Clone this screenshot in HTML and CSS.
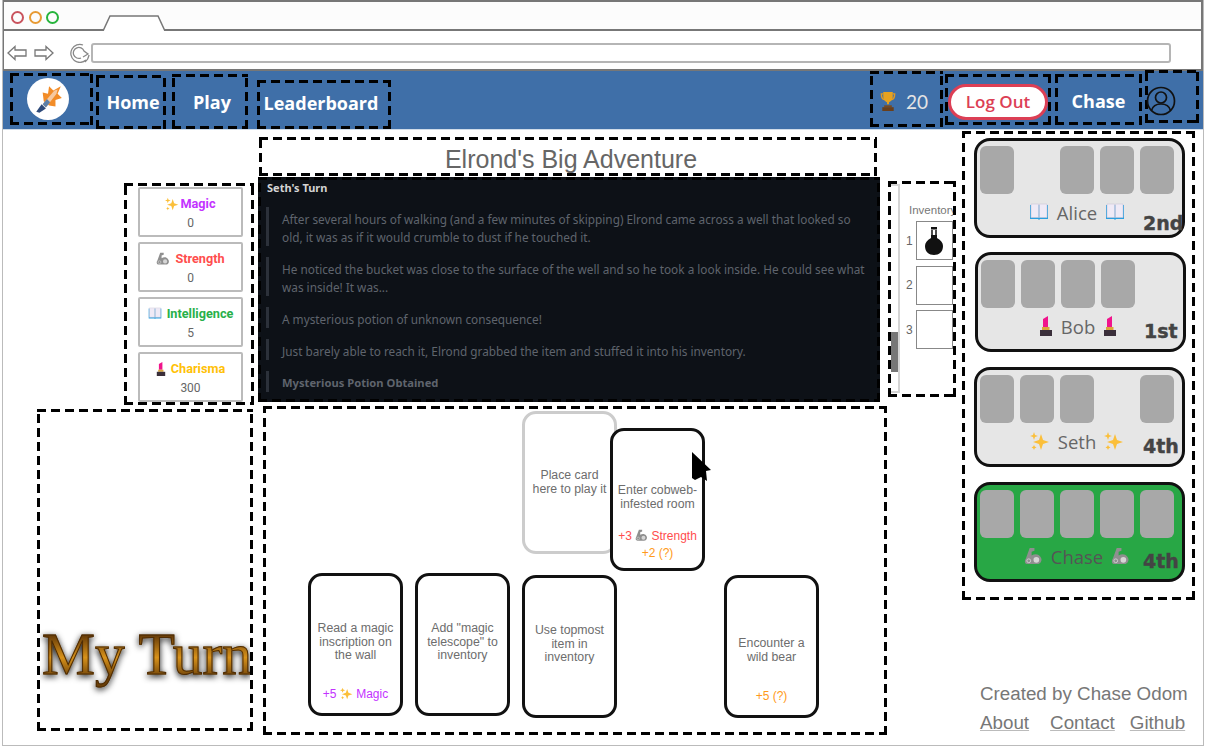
FILE: index.html
```html
<!DOCTYPE html>
<html lang="en">
  <head>
    <meta charset="UTF-8" />
    <title>Elrond's Big Adventure</title>
    <link rel="stylesheet" href="styles.css">
  </head>
  <body>
    <svg class="sprite" width="0" height="0">
      <symbol id="i-spark" viewBox="0 0 20 20">
        <path fill="#fbbf3a" d="M11 3 L13 9 L19 11 L13 13 L11 19 L9 13 L3 11 L9 9 Z"/>
        <path fill="#fbbf3a" d="M4 1 L5 4 L8 5 L5 6 L4 9 L3 6 L0 5 L3 4 Z"/>
        <path fill="#fbbf3a" d="M4 14 L4.8 15.6 L6.5 16.5 L4.8 17.3 L4 19 L3.2 17.3 L1.5 16.5 L3.2 15.6 Z"/>
      </symbol>
      <symbol id="i-book" viewBox="0 0 20 18">
        <path fill="#2a9fe0" d="M1 2 H19 V16 H11 L10 17 L9 16 H1 Z"/>
        <path fill="#efeaf6" stroke="#c9c6d6" stroke-width=".6" d="M2 1 H9.6 V14.5 H2 Z M10.4 1 H18 V14.5 H10.4 Z"/>
      </symbol>
      <symbol id="i-lip" viewBox="0 0 14 20">
        <path fill="#f0148c" d="M4 11 V3 L9 0 V11 Z"/>
        <rect x="3" y="11" width="7.500" height="3" fill="#d9a63c"/>
        <rect x="1" y="14" width="12" height="6" fill="#3a2f3a"/>
      </symbol>
      <symbol id="i-arm" viewBox="0 0 20 20">
        <path fill="#8f8f8f" d="M6 1 L11 1 L11 4 L8 5 L8 9 C11 7 15 7 17 10 C20 13 18 18 14 18 L4 18 C1 18 0 15 2 12 Z"/>
        <circle cx="13" cy="13.500" r="3" fill="#d6d6d6"/>
        <circle cx="5" cy="14.500" r="2" fill="none" stroke="#d0d0d0"/>
      </symbol>
      <symbol id="i-cup" viewBox="0 0 16 20">
        <path fill="none" stroke="#e39a1f" stroke-width="1.500" d="M3 2 H1 C1 6 3 8 5 8 M13 2 H15 C15 6 13 8 11 8"/>
        <path fill="#e7a21f" d="M3 0 H13 V5 C13 9 10 10 9 11 V13 H7 V11 C6 10 3 9 3 5 Z"/>
        <rect x="4" y="14" width="8" height="2" fill="#7a4a1e"/>
        <rect x="2" y="16" width="12" height="4" fill="#6a3f1a"/>
      </symbol>
      <symbol id="i-potion" viewBox="0 0 18 28">
        <rect x="6" y="0" width="6" height="2.500" fill="#111"/>
        <path fill="none" stroke="#111" stroke-width="1.500" d="M7 3 V9 M11 3 V9"/>
        <path fill="#111" d="M6 8 H12 V11 C16 13 18 16 18 19 C18 25 14 28 9 28 C4 28 0 25 0 19 C0 16 2 13 6 11 Z"/>
      </symbol>
      <symbol id="i-back" viewBox="0 0 20 16">
        <path fill="#fff" stroke="#777" stroke-width="1.300" d="M1 8 L8 1.500 V5 H19 V11 H8 V14.500 Z"/>
      </symbol>
      <symbol id="i-next" viewBox="0 0 20 16">
        <path fill="#fff" stroke="#777" stroke-width="1.300" d="M19 8 L12 1.500 V5 H1 V11 H12 V14.500 Z"/>
      </symbol>
    </svg>

    <div class="window">
      <div class="chrome">
        <div class="tabbar">
          <span class="dot dot-red"></span>
          <span class="dot dot-orange"></span>
          <span class="dot dot-green"></span>
          <svg class="tab" width="64" height="17" viewBox="0 0 64 17">
            <path fill="#fff" stroke="#777" stroke-width="1.500" d="M1 17 L8 2 H56 L63 17"/>
          </svg>
        </div>
        <div class="urlbar">
          <svg class="arrow" width="20" height="16"><use href="#i-back"/></svg>
          <svg class="arrow arrow-next" width="20" height="16"><use href="#i-next"/></svg>
          <svg class="reload" width="20" height="20" viewBox="0 0 20 20">
            <path fill="none" stroke="#888" stroke-width="1.300" d="M16 17 A9 9 0 1 1 13 2 M15 19 A11 11 0 0 0 19 12 M11 15 A5.500 5.500 0 1 1 14 8 L18 11 L13 14"/>
          </svg>
          <div class="url"></div>
        </div>
      </div>

      <nav class="nav">
        <div class="mark mark-logo">
          <span class="logo">
            <svg width="32" height="32" viewBox="0 0 30 30">
              <path fill="#f28c28" d="M11 17 L10 9 L15 10 L16 3 L20 7 L27 3 L24 10 L28 14 L22 16 L22 22 L16 21 Z"/>
              <path fill="#f6c9a0" d="M10 20 L21 7 L24 6 L23 10 L13 23 Z"/>
              <path fill="#5d7fa8" d="M13 23 L17 18 L14 15 L10 20 Z"/>
              <path fill="#2e4a7a" d="M4 27 L9 20 L13 24 L7 28 Z"/>
            </svg>
          </span>
        </div>
        <a class="mark mark-home nav-link">Home</a>
        <a class="mark mark-play nav-link">Play</a>
        <a class="mark mark-board nav-link">Leaderboard</a>
        <div class="mark mark-score">
          <svg width="16" height="19"><use href="#i-cup"/></svg>
          <span class="score">20</span>
        </div>
        <div class="mark mark-logout"><button class="logout">Log Out</button></div>
        <a class="mark mark-chase nav-link">Chase</a>
        <div class="mark mark-profile">
          <svg width="30" height="30" viewBox="0 0 30 30">
            <g fill="none" stroke="#111" stroke-width="1.700">
              <circle cx="15" cy="15" r="13.500"/>
              <circle cx="15" cy="11.500" r="5.500"/>
              <path d="M5.500 24.500 C7 19 11 18 15 18 C19 18 23 19 24.500 24.500"/>
            </g>
          </svg>
        </div>
      </nav>

      <main class="game">
        <section class="col-left">
          <div class="mark stats">
            <div class="stat">
              <div class="stat-name"><svg width="14" height="14"><use href="#i-spark"/></svg><b class="magic">Magic</b></div>
              <div class="stat-value">0</div>
            </div>
            <div class="stat">
              <div class="stat-name"><svg class="gap" width="14" height="14"><use href="#i-arm"/></svg><b class="strength">Strength</b></div>
              <div class="stat-value">0</div>
            </div>
            <div class="stat">
              <div class="stat-name"><svg class="gap" width="14" height="13"><use href="#i-book"/></svg><b class="smart">Intelligence</b></div>
              <div class="stat-value">5</div>
            </div>
            <div class="stat">
              <div class="stat-name"><svg class="gap" width="10" height="14"><use href="#i-lip"/></svg><b class="charm">Charisma</b></div>
              <div class="stat-value">300</div>
            </div>
          </div>
          <div class="mark my-turn"><span class="my-turn-text">My Turn</span></div>
        </section>

        <section class="col-mid">
          <div class="top-row">
            <div class="story">
              <h1 class="mark title">Elrond's Big Adventure</h1>
              <div class="mark log">
                <h2 class="log-head">Seth's Turn</h2>
                <p class="log-line">After several hours of walking (and a few minutes of skipping) Elrond came across a well that looked so old, it was as if it would crumble to dust if he touched it.</p>
                <p class="log-line">He noticed the bucket was close to the surface of the well and so he took a look inside. He could see what was inside! It was...</p>
                <p class="log-line">A mysterious potion of unknown consequence!</p>
                <p class="log-line">Just barely able to reach it, Elrond grabbed the item and stuffed it into his inventory.</p>
                <p class="log-line log-strong">Mysterious Potion Obtained</p>
              </div>
            </div>
            <div class="mark inventory">
              <div class="scroll"><div class="thumb"></div></div>
              <div class="inv-list">
                <div class="inv-title">Inventory</div>
                <div class="inv-row"><span>1</span><div class="inv-slot"><svg width="18" height="28"><use href="#i-potion"/></svg></div></div>
                <div class="inv-row"><span>2</span><div class="inv-slot"></div></div>
                <div class="inv-row"><span>3</span><div class="inv-slot"></div></div>
              </div>
            </div>
          </div>

          <div class="mark hand">
            <div class="play-row">
              <div class="card card-slot"><div class="card-text">Place card<br>here to play it</div></div>
              <div class="card card-over">
                <div class="card-text">Enter cobweb-infested room</div>
                <div class="bonus">
                  <div class="strength">+3 <svg class="gap" width="13" height="13"><use href="#i-arm"/></svg> Strength</div>
                  <div class="mystery">+2 (?)</div>
                </div>
              </div>
              <svg class="pointer" width="20" height="30" viewBox="0 0 20 30">
                <path fill="#000" d="M0 0 L19 18 L14 19 L15 29 L9 25 L3 28 L0 26 Z"/>
              </svg>
            </div>
            <div class="card-row">
              <div class="card">
                <div class="card-text">Read a magic inscription on the wall</div>
                <div class="bonus"><div class="magic">+5 <svg width="13" height="13"><use href="#i-spark"/></svg> Magic</div></div>
              </div>
              <div class="card"><div class="card-text">Add "magic telescope" to inventory</div></div>
              <div class="card card-down"><div class="card-text">Use topmost item in inventory</div></div>
              <div class="card card-down card-far">
                <div class="card-text card-text-low">Encounter a wild bear</div>
                <div class="bonus"><div class="mystery">+5 (?)</div></div>
              </div>
            </div>
          </div>
        </section>

        <section class="col-right">
          <div class="mark players">
            <div class="board">
              <div class="mini-cards">
                <i class="mini"></i><i></i><i class="mini"></i><i class="mini"></i><i class="mini"></i>
              </div>
              <div class="who"><svg width="20" height="18"><use href="#i-book"/></svg><span>Alice</span><svg width="20" height="18"><use href="#i-book"/></svg></div>
              <b class="rank rank-low">2nd</b>
            </div>
            <div class="board board-bob">
              <div class="mini-cards">
                <i class="mini"></i><i class="mini"></i><i class="mini"></i><i class="mini"></i><i></i>
              </div>
              <div class="who"><svg width="14" height="20"><use href="#i-lip"/></svg><span>Bob</span><svg width="14" height="20"><use href="#i-lip"/></svg></div>
              <b class="rank">1st</b>
            </div>
            <div class="board">
              <div class="mini-cards">
                <i class="mini"></i><i class="mini"></i><i class="mini"></i><i></i><i class="mini"></i>
              </div>
              <div class="who"><svg width="20" height="20"><use href="#i-spark"/></svg><span>Seth</span><svg width="20" height="20"><use href="#i-spark"/></svg></div>
              <b class="rank">4th</b>
            </div>
            <div class="board board-me">
              <div class="mini-cards">
                <i class="mini"></i><i class="mini"></i><i class="mini"></i><i class="mini"></i><i class="mini"></i>
              </div>
              <div class="who"><svg width="19" height="19"><use href="#i-arm"/></svg><span>Chase</span><svg width="19" height="19"><use href="#i-arm"/></svg></div>
              <b class="rank">4th</b>
            </div>
          </div>
          <footer class="credits">
            <div>Created by Chase Odom</div>
            <div class="credit-links"><a>About</a><a class="credit-contact">Contact</a><a>Github</a></div>
          </footer>
        </section>
      </main>
    </div>
  </body>
</html>
```

FILE: styles.css
```css
* {
  margin: 0;
  padding: 0;
  box-sizing: border-box;
}
body {
  background: #fff;
  font-family: "Liberation Sans", Arial, sans-serif;
  color: #666;
}
.sprite {
  position: absolute;
}
.window {
  width: 1202px;
  height: 746px;
  margin-left: 2px;
  border: 1px solid #bbb;
  border-top: 0;
  overflow: hidden;
}

/* the dashed boxes: 9px on, 5px off, wider dashes than border: dashed gives */
.mark {
  border: 3px solid transparent;
  background-origin: border-box;
  background-clip: border-box;
  background-repeat: no-repeat;
  background-image:
    repeating-linear-gradient(90deg, #000 0 9px, transparent 9px 14px),
    repeating-linear-gradient(90deg, #000 0 9px, transparent 9px 14px),
    repeating-linear-gradient(0deg, #000 0 9px, transparent 9px 14px),
    repeating-linear-gradient(0deg, #000 0 9px, transparent 9px 14px);
  background-size: 100% 3px, 100% 3px, 3px 100%, 3px 100%;
  background-position: left top, left bottom, left top, right top;
}

/* browser frame */
.chrome {
  height: 71px;
  margin-left: -1px;
  border: 2px solid #777;
  background: #fff;
}
.tabbar {
  height: 29px;
  display: flex;
  align-items: flex-start;
  padding: 9px 0 0 7px;
  gap: 4.500px;
  background: #fcfcfc;
  border-bottom: 2px solid #777;
}
.dot {
  width: 13px;
  height: 13px;
  border-radius: 50%;
  border: 2px solid;
}
.dot-red { border-color: #c9535d; }
.dot-orange { border-color: #e79a33; }
.dot-green { border-color: #27b43c; }
.tab {
  margin: 3px 0 0 38px;
}
.urlbar {
  height: 38px;
  display: flex;
  align-items: center;
  padding: 5px 0 0 3px;
}
.arrow-next {
  margin-left: 7px;
}
.reload {
  margin-left: 16px;
}
.url {
  width: 1080px;
  height: 20px;
  margin-left: 1px;
  border: 2px solid #b5b5b5;
  border-radius: 3px;
}

/* nav */
.nav {
  height: 59px;
  display: flex;
  align-items: flex-start;
  background: #3f6fa8;
  border-bottom: 1px solid #cfdbe8;
}
.nav .mark {
  display: flex;
  align-items: center;
  justify-content: center;
}
.nav-link {
  color: #fff;
  font-family: "Open Sans", sans-serif;
  font-weight: 700;
  font-size: 18px;
}
.mark-logo { width: 83px; height: 52px; margin: 2px 0 0 7px; padding-right: 8px; }
.mark-home { width: 70px; height: 54px; margin: 4px 0 0 3px; padding-left: 4px; }
.mark-play { width: 76px; height: 55px; margin: 3px 0 0 6px; padding-left: 4px; }
.mark-board { width: 134px; height: 49px; margin: 9px 0 0 9px; padding: 0 6px 3px 0; }
.mark-score { width: 73px; height: 56px; margin: 0 0 0 479px; gap: 10px; padding: 4px 5px 0 0; }
.mark-logout { width: 106px; height: 51px; margin: 3px 0 0 2px; }
.mark-chase { width: 87px; height: 51px; margin: 3px 0 0 4px; padding-top: 2px; }
.mark-profile { width: 54px; height: 53px; margin: -1px 0 0 3px; }
.nav .mark-profile {
  justify-content: flex-start;
  align-items: flex-start;
}
.mark-profile svg {
  margin: 13px 0 0 -2px;
}
.logo {
  width: 42px;
  height: 42px;
  border-radius: 50%;
  background: #fff;
  display: flex;
  align-items: center;
  justify-content: center;
}
.score {
  color: #e4e4e4;
  font-family: Lato, sans-serif;
  font-size: 19px;
}
.logout {
  width: 101px;
  height: 36px;
  margin-top: 4px;
  border: 3px solid #dc3f55;
  border-radius: 18px;
  background: #fff;
  color: #dc3f55;
  font-family: "Open Sans", sans-serif;
  font-weight: 600;
  font-size: 17px;
}

/* main columns */
.game {
  display: flex;
  align-items: flex-start;
}
.col-left {
  width: 255px;
}
.col-mid {
  width: 699px;
}
.col-right {
  width: 233px;
  margin: 1px 0 0 5px;
}

/* stats */
.stats {
  width: 130px;
  height: 222px;
  margin: 53px 0 0 121px;
  padding: 1px 8px 0 11px;
  display: flex;
  flex-direction: column;
  gap: 5px;
}
.stat {
  height: 50px;
  border: 2px solid #bbb;
  border-radius: 2px;
  text-align: center;
  font-family: Roboto, sans-serif;
  font-size: 12px;
  padding-top: 6px;
}
.stat-name {
  height: 17px;
  display: flex;
  align-items: center;
  justify-content: center;
  gap: 1px;
  font-size: 12.700px;
}
.stat-name .gap {
  margin-right: 4px;
}
.stat-value {
  margin-top: 4px;
  color: #666;
}
.magic { color: #c333ff; }
.strength { color: #ff4d4d; }
.smart { color: #28b04a; }
.charm { color: #ffc107; }
.mystery { color: #ff9a1a; }

/* my turn */
.my-turn {
  width: 216px;
  height: 322px;
  margin: 4px 0 0 34px;
  padding-top: 207px;
  overflow: hidden;
}
.my-turn-text {
  display: block;
  padding-left: 2px;
  font-family: "Liberation Serif", serif;
  font-size: 59.500px;
  line-height: 70px;
  white-space: nowrap;
  color: transparent;
  background: linear-gradient(#5a3206 20%, #d8921a 55%, #6a3f08 85%);
  -webkit-background-clip: text;
  background-clip: text;
  -webkit-text-stroke: 1px #4e2c05;
  filter: drop-shadow(0 2px 3px rgba(0, 0, 0, 0.9));
}

/* story */
.top-row {
  display: flex;
  align-items: flex-start;
  height: 272px;
}
.story {
  width: 622px;
}
.title {
  width: 618px;
  height: 39px;
  margin: 7px 0 1px 1px;
  padding-left: 6px;
  text-align: center;
  font-weight: 400;
  font-size: 25px;
  line-height: 38px;
  color: #666;
}
.log {
  height: 225px;
  padding: 0 0 0 5px;
  background-color: #0d1117;
  font-family: "Noto Sans", sans-serif;
  overflow: hidden;
}
.log-head {
  margin: 0 0 11px 1px;
  font-size: 11px;
  line-height: 16px;
  font-weight: 700;
  color: #d4d4d4;
}
.log-line {
  width: 602px;
  margin-bottom: 11px;
  padding: 3px 0 0 13px;
  border-left: 3px solid #2c313a;
  font-size: 11.800px;
  line-height: 18px;
  color: #5f646d;
}
.log-strong {
  font-weight: 700;
  font-size: 11.200px;
}

/* inventory */
.inventory {
  width: 68px;
  height: 216px;
  margin: 51px 0 0 8px;
  display: flex;
  overflow: hidden;
}
.scroll {
  flex: none;
  width: 11px;
  height: 209px;
  margin-left: -2px;
  border: 2px solid #d4d4d4;
  border-width: 2px 2px 2px 0;
  background: #fff;
  padding-top: 146px;
}
.thumb {
  height: 40px;
  background: #777;
}
.inv-list {
  flex: none;
  padding: 19px 0 0 6px;
  font-size: 11.500px;
  color: #777;
}
.inv-title {
  margin: 0 0 4px 3px;
  white-space: nowrap;
  line-height: 14px;
}
.inv-row {
  display: flex;
  align-items: center;
  gap: 3px;
  margin-bottom: 5.500px;
  font-size: 12px;
  color: #666;
}
.inv-slot {
  width: 37px;
  height: 39px;
  border: 1px solid #888;
  display: flex;
  align-items: center;
  justify-content: center;
}

/* cards */
.hand {
  width: 624px;
  height: 329px;
  margin: 4px 0 0 5px;
  padding: 2px 0 0 42px;
}
.play-row {
  position: relative;
  height: 162px;
  padding-left: 214px;
}
.card-row {
  display: flex;
  gap: 12px;
}
.card {
  position: relative;
  width: 95px;
  height: 143px;
  border: 3px solid #111;
  border-radius: 14px;
  background: #fff;
  font-size: 12.300px;
  line-height: 13.700px;
  color: #6d6d6d;
  text-align: center;
}
.card-slot {
  border-color: #ccc;
}
.card-slot .card-text {
  padding-top: 4px;
}
.card-over {
  position: absolute;
  left: 302px;
  top: 17px;
}
.card-down {
  margin-top: 2px;
}
.card-far {
  margin-left: 95px;
}
.card-text {
  height: 133px;
  padding: 0 3px;
  display: flex;
  align-items: center;
  justify-content: center;
}
.card-text-low {
  padding: 12px 8px 0;
}
.bonus {
  position: absolute;
  left: 0;
  right: 0;
  bottom: 10px;
  font-size: 12px;
  line-height: 17px;
  white-space: nowrap;
}
.bonus svg {
  vertical-align: -2px;
}
.card-over .bonus {
  bottom: 6px;
}
.pointer {
  position: absolute;
  left: 384px;
  top: 41px;
}

/* players */
.players {
  height: 469px;
  padding: 4px 0 0 9px;
  display: flex;
  flex-direction: column;
  gap: 15px;
}
.board {
  position: relative;
  width: 211px;
  height: 100px;
  flex: none;
  padding: 5px 3px 0;
  border: 3px solid #111;
  border-radius: 16px;
  background: #e6e6e6;
}
.board-bob {
  margin: -1px 0 0 1px;
}
.board-me {
  background: #28a745;
}
.mini-cards {
  display: grid;
  grid-template-columns: repeat(5, 34px);
  gap: 6px;
  height: 48px;
}
.mini {
  border-radius: 6px;
  background: #a8a8a8;
}
.who {
  display: flex;
  align-items: center;
  justify-content: center;
  gap: 8px;
  height: 24px;
  margin-top: 6px;
  padding-right: 5px;
  font-family: "Open Sans", sans-serif;
  font-size: 18.500px;
  color: #666;
}
.board-me .who {
  color: #555;
}
.rank {
  position: absolute;
  left: 166px;
  bottom: 6px;
  font-family: "DejaVu Sans", sans-serif;
  font-size: 19px;
  line-height: 24px;
  color: #444;
  -webkit-text-stroke: 0.4px #444;
}
.rank-low {
  bottom: 0;
}

/* footer */
.credits {
  margin: 79px 0 0 18px;
  font-size: 18.800px;
  line-height: 29px;
  color: #777;
  white-space: nowrap;
}
.credit-links {
  display: flex;
  gap: 15px;
}
.credit-links a {
  text-decoration: underline;
  text-decoration-color: #bbb;
}
.credit-contact {
  margin-left: 6px;
}
```
